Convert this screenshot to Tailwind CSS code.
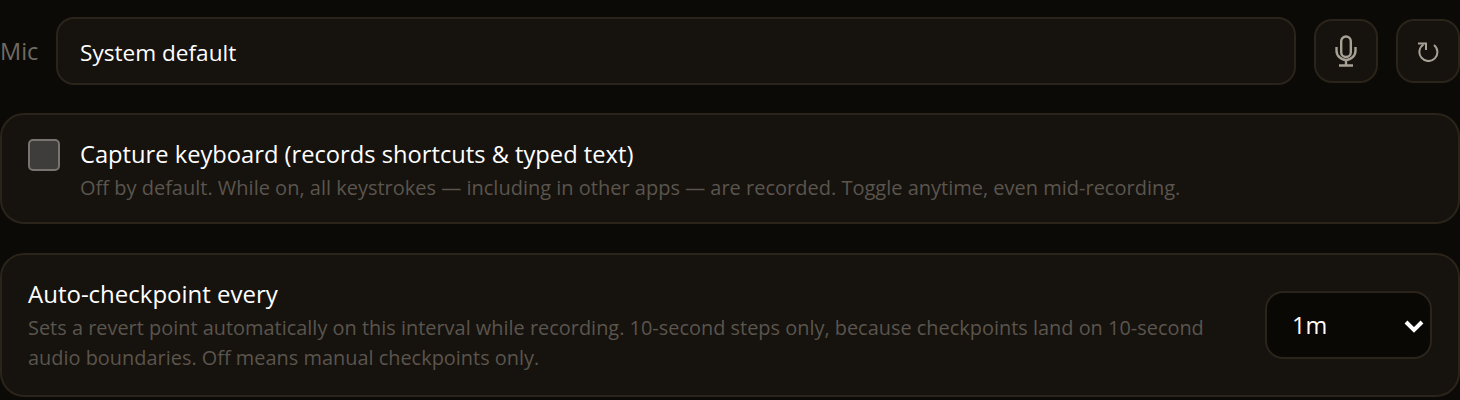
<!DOCTYPE html>
<html lang="en">
<head>
  <meta charset="UTF-8">
  <title>Recording settings</title>
  <script src="https://cdn.jsdelivr.net/npm/@tailwindcss/browser@4"></script>
</head>
<body class="bg-[#0c0a07] h-[400px] overflow-hidden font-['Open_Sans','Noto_Sans',sans-serif] text-white">
  <div class="pt-[17px]">
    <!-- Mic row -->
    <div class="flex items-center h-[68px]">
      <span class="w-[56px] pt-[1px] text-[23.5px] text-[#6f6a63]">Mic</span>
      <div class="w-[1240px] h-[68px] flex items-center pl-[22px] pt-[3px] bg-[#16120d] border-2 border-[#2a241a] rounded-[18px] text-[22.6px]">System default</div>
      <button class="ml-[18px] w-[64px] h-[64px] flex items-center justify-center bg-[#16120d] border-2 border-[#2a241a] rounded-[18px]">
        <svg width="22" height="32" viewBox="0 0 22 32" fill="none" stroke="#a8a196" stroke-width="2.4">
          <rect x="6.2" y="1.5" width="9.6" height="20.5" rx="4.8"/>
          <path d="M1.5 12v3.5a9.5 9.5 0 0 0 19 0v-3.5"/>
          <path d="M11 25v5.5M4 30.5h14"/>
        </svg>
      </button>
      <button class="ml-[18px] w-[64px] h-[64px] flex items-center justify-center bg-[#16120d] border-2 border-[#2a241a] rounded-[18px]">
        <svg width="22" height="22" viewBox="0 0 22 22" fill="none" stroke="#a8a196" stroke-width="2">
          <path d="M17 5A9 9 0 1 1 6.5 4.5"/>
          <path d="M1 3.5h8v6.5"/>
        </svg>
      </button>
    </div>

    <!-- Capture keyboard -->
    <div class="mt-[28px] h-[111px] flex items-start pl-[26px] pt-[24px] bg-[#16120d] border-2 border-[#2a241a] rounded-[24px]">
      <span class="w-[32px] h-[32px] shrink-0 bg-[#3f3d3b] border-2 border-[#77736e] rounded-[5px]"></span>
      <div class="ml-[20px] -mt-[1px]">
        <div class="text-[23.7px] leading-[32px]">Capture keyboard (records shortcuts &amp; typed text)</div>
        <div class="mt-[3px] text-[20px] leading-[30px] text-[#5a554e]">Off by default. While on, all keystrokes — including in other apps — are recorded. Toggle anytime, even mid-recording.</div>
      </div>
    </div>

    <!-- Auto-checkpoint -->
    <div class="mt-[29px] h-[144px] flex items-center justify-between pl-[26px] pr-[26px] bg-[#16120d] border-2 border-[#2a241a] rounded-[24px]">
      <div class="w-[1200px]">
        <div class="text-[24px] leading-[32px]">Auto-checkpoint every</div>
        <div class="mt-[3px] text-[19.93px] leading-[30px] text-[#5a554e]">Sets a revert point automatically on this interval while recording. 10-second steps only, because checkpoints land on 10-second audio boundaries. Off means manual checkpoints only.</div>
      </div>
      <div class="w-[167px] h-[68px] flex items-center justify-between pl-[25px] pr-[6px] pt-[1px] bg-[#0a0805] border-2 border-[#2a241a] rounded-[18px] text-[23.5px]">
        <span>1m</span>
        <svg width="20" height="14" viewBox="0 0 20 14" fill="none" stroke="#fff" stroke-width="4">
          <path d="M2 3l8 8 8-8"/>
        </svg>
      </div>
    </div>
  </div>
</body>
</html>
